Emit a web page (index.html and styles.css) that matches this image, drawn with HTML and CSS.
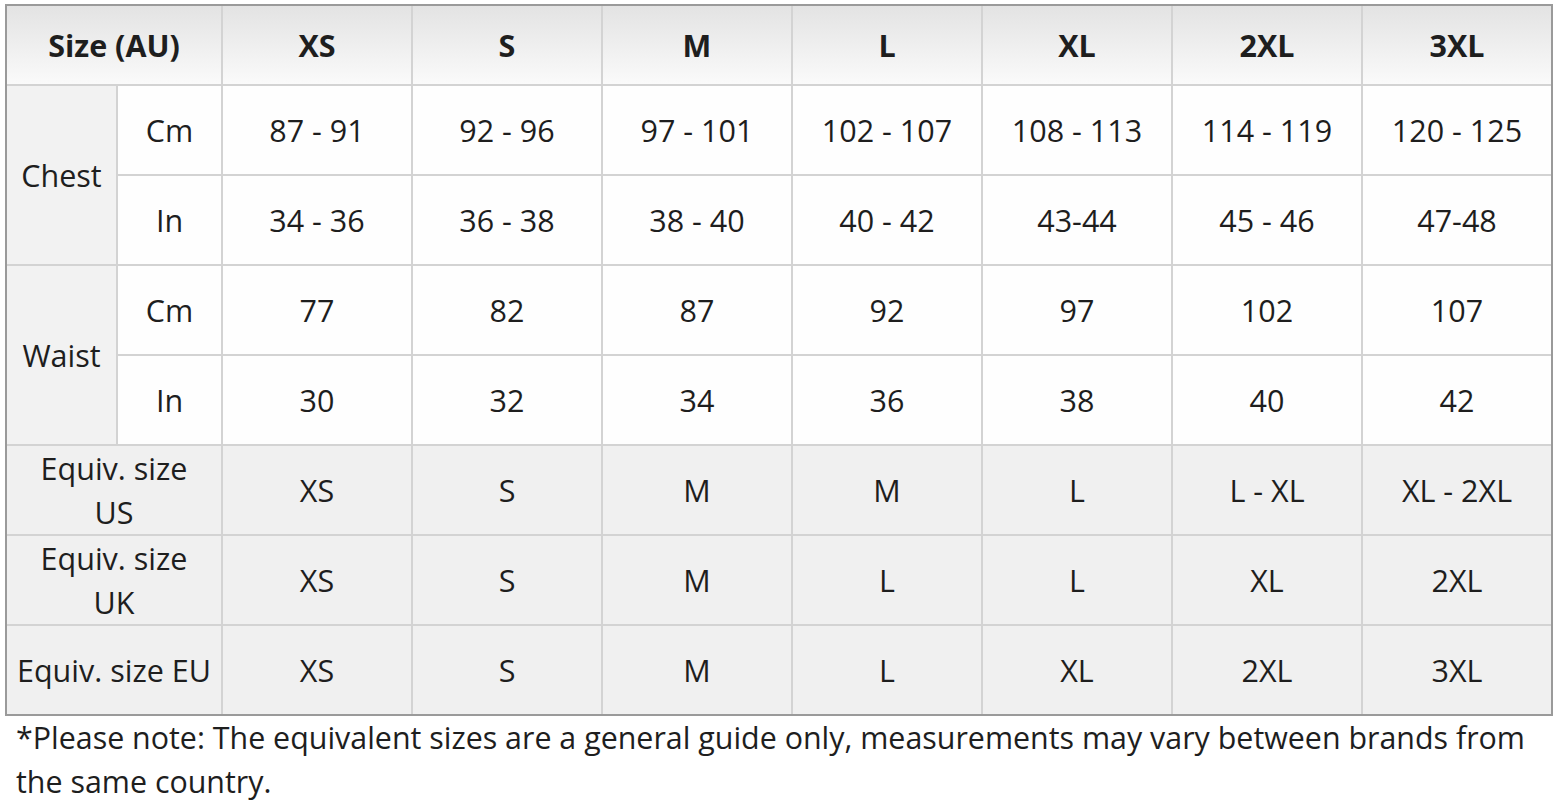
FILE: index.html
```html
<!DOCTYPE html>
<html lang="en">
<head>
<meta charset="utf-8">
<title>Size chart</title>
<link rel="stylesheet" href="styles.css">
</head>
<body>
<div class="chart">
  <div class="grid">
    <div class="cell head span2">Size (AU)</div>
    <div class="cell head">XS</div>
    <div class="cell head">S</div>
    <div class="cell head">M</div>
    <div class="cell head">L</div>
    <div class="cell head">XL</div>
    <div class="cell head">2XL</div>
    <div class="cell head">3XL</div>

    <div class="cell group rows2">Chest</div>
    <div class="cell unit">Cm</div>
    <div class="cell">87 - 91</div>
    <div class="cell">92 - 96</div>
    <div class="cell">97 - 101</div>
    <div class="cell">102 - 107</div>
    <div class="cell">108 - 113</div>
    <div class="cell">114 - 119</div>
    <div class="cell">120 - 125</div>
    <div class="cell unit">In</div>
    <div class="cell">34 - 36</div>
    <div class="cell">36 - 38</div>
    <div class="cell">38 - 40</div>
    <div class="cell">40 - 42</div>
    <div class="cell">43-44</div>
    <div class="cell">45 - 46</div>
    <div class="cell">47-48</div>

    <div class="cell group rows2">Waist</div>
    <div class="cell unit">Cm</div>
    <div class="cell">77</div>
    <div class="cell">82</div>
    <div class="cell">87</div>
    <div class="cell">92</div>
    <div class="cell">97</div>
    <div class="cell">102</div>
    <div class="cell">107</div>
    <div class="cell unit">In</div>
    <div class="cell">30</div>
    <div class="cell">32</div>
    <div class="cell">34</div>
    <div class="cell">36</div>
    <div class="cell">38</div>
    <div class="cell">40</div>
    <div class="cell">42</div>

    <div class="cell equiv span2 label">Equiv. size<br>US</div>
    <div class="cell equiv">XS</div>
    <div class="cell equiv">S</div>
    <div class="cell equiv">M</div>
    <div class="cell equiv">M</div>
    <div class="cell equiv">L</div>
    <div class="cell equiv">L - XL</div>
    <div class="cell equiv">XL - 2XL</div>

    <div class="cell equiv span2 label">Equiv. size<br>UK</div>
    <div class="cell equiv">XS</div>
    <div class="cell equiv">S</div>
    <div class="cell equiv">M</div>
    <div class="cell equiv">L</div>
    <div class="cell equiv">L</div>
    <div class="cell equiv">XL</div>
    <div class="cell equiv">2XL</div>

    <div class="cell equiv span2 label">Equiv. size EU</div>
    <div class="cell equiv">XS</div>
    <div class="cell equiv">S</div>
    <div class="cell equiv">M</div>
    <div class="cell equiv">L</div>
    <div class="cell equiv">XL</div>
    <div class="cell equiv">2XL</div>
    <div class="cell equiv">3XL</div>
  </div>
  <p class="note">*Please note: The equivalent sizes are a general guide only, measurements may vary between brands from<br>the same country.</p>
</div>
</body>
</html>
```

FILE: styles.css
```css
html, body {
  margin: 0;
  padding: 0;
  background: #ffffff;
}

body {
  font-family: "Open Sans", "Liberation Sans", sans-serif;
  color: #1e1e1e;
}

.chart {
  padding: 4px 0 0 5px;
}

.grid {
  display: grid;
  grid-template-columns: 109px 103px repeat(7, 188px);
  grid-template-rows: 78px repeat(7, 88px);
  gap: 2px;
  width: 1544px;
  background: #d3d3d3;
  border: 2px solid #9a9a9a;
}

.cell {
  display: flex;
  align-items: center;
  justify-content: center;
  text-align: center;
  background: #fefefe;
  font-size: 30.5px;
  line-height: 44px;
}

.head {
  font-weight: 700;
  background: linear-gradient(#e3e3e3, #fafafa);
}

.span2 {
  grid-column: span 2;
}

.rows2 {
  grid-row: span 2;
}

.group {
  background: #f2f2f2;
}

.unit {
  background: #fefefe;
}

.equiv {
  background: #f0f0f0;
}

.note {
  margin: 0;
  padding: 0 0 0 11px;
  font-size: 30.4px;
  line-height: 44px;
  color: #1e1e1e;
}
```
